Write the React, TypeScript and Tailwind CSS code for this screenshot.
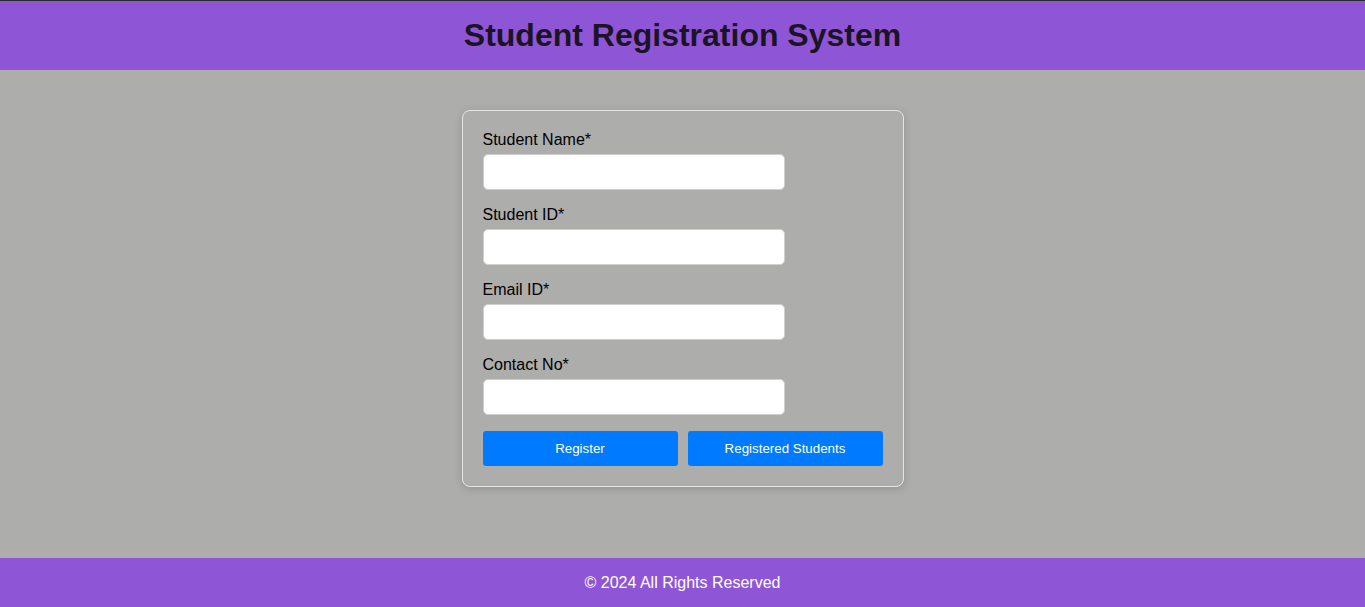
export default function App(){

const fields = ["Student Name*","Student ID*","Email ID*","Contact No*"]

return(

<div className="min-h-screen flex flex-col bg-[#adadab] font-['Liberation_Sans',Arial,sans-serif]">

{/* Header */}

<header className="h-[70px] border-t border-[#2a2a2a] bg-[#8e56d6] flex items-center justify-center pb-[2px]">
<h1 className="text-[32px] font-bold text-[#1c1424]">
Student Registration System
</h1>
</header>

{/* Form */}

<main className="flex-1 flex justify-center pt-10">

<form
className="w-[442px] h-fit border border-[#e6e6e6] rounded-lg p-5 shadow-[0_2px_8px_rgba(0,0,0,0.15)]"
onSubmit={(e)=>e.preventDefault()}
>

{fields.map((f)=>(
<div key={f} className="mb-4">
<label className="block text-base leading-[18px] text-black mb-[5px]">
{f}
</label>
<input
type="text"
className="w-[302px] h-9 bg-white border border-[#cfcfcf] rounded-[5px] px-2 outline-none"
/>
</div>
))}

<div className="flex gap-[10px]">
<button className="flex-1 h-[35px] bg-[#007bff] text-white text-[13.33px] rounded-[3px]">
Register
</button>
<button className="flex-1 h-[35px] bg-[#007bff] text-white text-[13.33px] rounded-[3px]">
Registered Students
</button>
</div>

</form>

</main>

{/* Footer */}

<footer className="h-[49px] bg-[#8e56d6] flex items-center justify-center text-white text-base">
© 2024 All Rights Reserved
</footer>

</div>

)
}
